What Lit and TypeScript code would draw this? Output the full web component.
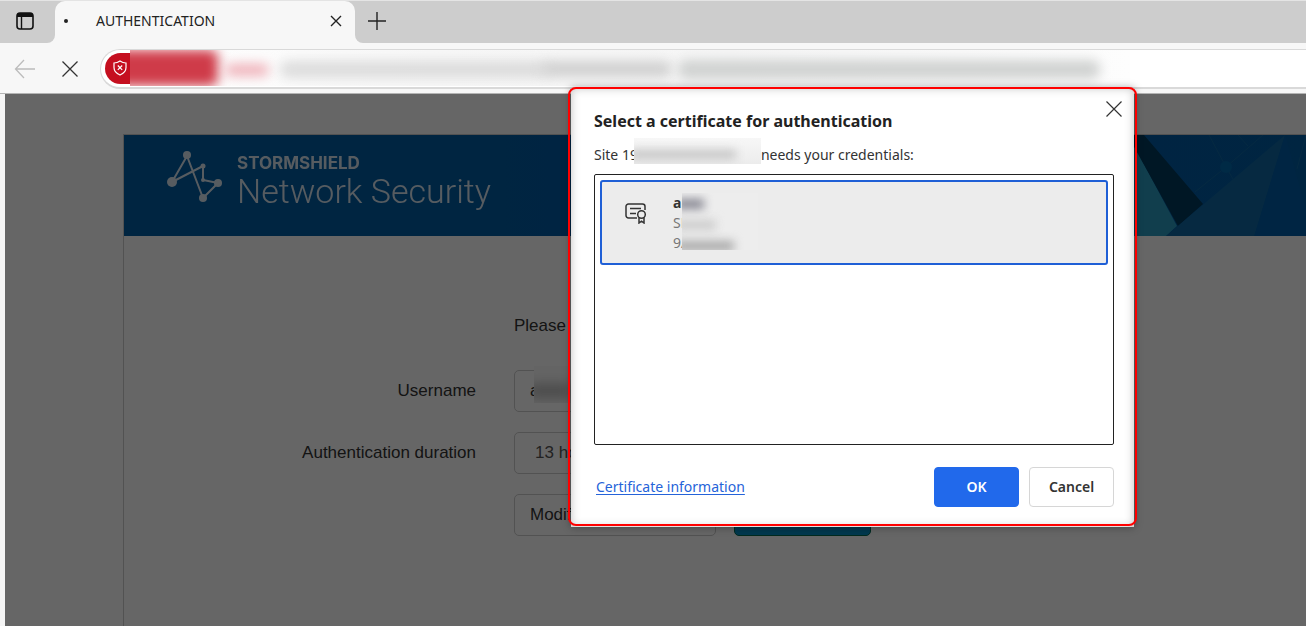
import { LitElement, html, css } from "lit";
import { customElement } from "lit/decorators.js";

const ui = css`
  :host {
    display: block;
    box-sizing: border-box;
    font-family: "Noto Sans", "Open Sans", sans-serif;
    font-size: 14px;
    line-height: 20px;
    color: #222;
  }
  *, *::before, *::after { box-sizing: border-box; }
  button, input, select { font: inherit; color: inherit; margin: 0; }
  svg { display: block; flex: none; }
`;

@customElement("browser-bar")
export class BrowserBar extends LitElement {
  static styles = [ui, css`
    .tabs { display: flex; padding-top: 1px; background: linear-gradient(#e4e4e4 1px, #cdcdcd 1px 30px, #f7f7f7 30px); }
    .lead, .rest { background: #cdcdcd; height: 42px; display: flex; align-items: center; padding-bottom: 2px; }
    .lead { width: 55px; padding-left: 16px; border-radius: 0 0 8px 0; }
    .rest { flex: 1; padding-left: 12px; border-radius: 0 0 0 8px; }
    .tab { width: 300px; height: 43px; background: #f7f7f7; border-radius: 10px 10px 0 0; display: flex; align-items: center; padding: 0 13px 3px 9px; }
    .dot { width: 4px; height: 4px; border-radius: 50%; background: #222; margin-right: 28px; }
    .name { flex: 1; }
    .icon { border: 0; padding: 0; background: none; display: flex; }
    .tools { display: flex; height: 50px; align-items: center; background: #f7f7f7; padding-left: 14px; border-bottom: 1px solid #b4b4b4; }
    .stop { margin: 0 22px 0 26px; }
    .address { flex: 1; min-width: 0; height: 40px; background: #fff; border: 1px solid #d9d9d9; border-width: 1px 0 2px 1px; border-radius: 20px 0 0 20px; display: flex; align-items: center; padding-left: 4px; }
    .warn { height: 31px; width: 25px; background: #c50f1f; border-radius: 16px 0 0 16px; display: flex; align-items: center; padding-left: 7px; }
    .veil { position: relative; width: 1000px; height: 36px; overflow: hidden; background: linear-gradient(90deg, #fff, #f8f8f8 30%, #f6f6f6 60%, #fdfdfd); flex: none; }
    .smear { position: absolute; filter: blur(6px); border-radius: 8px; }
    .s1 { left: -20px; top: 0; width: 108px; height: 36px; background: #cf3b49; }
    .s2 { left: 95px; top: 14px; width: 44px; height: 12px; background: #efb0b8; }
    .s3 { left: 150px; top: 11px; width: 270px; height: 17px; background: #dcdcdc; }
    .s4 { left: 412px; top: 11px; width: 130px; height: 16px; background: #d0d0d0; }
    .s5 { left: 548px; top: 10px; width: 422px; height: 19px; background: #d0d2d1; }
  `];
  render() {
    return html`
      <div class="tabs">
        <div class="lead"><button class="icon" aria-label="Tab actions">
          <svg width="18" height="18" viewBox="0 0 18 18"><rect x="1" y="1" width="16" height="16" rx="3" fill="none" stroke="#111" stroke-width="1.6"/><path d="M1 5V4a3 3 0 0 1 3-3h10a3 3 0 0 1 3 3v1z" fill="#111"/><path d="M5.5 5v12" stroke="#111" stroke-width="1.4"/></svg>
        </button></div>
        <div class="tab"><span class="dot"></span><span class="name">AUTHENTICATION</span>
          <button class="icon" aria-label="Close tab"><svg width="12" height="12" viewBox="0 0 12 12"><path d="M1 1l10 10M11 1L1 11" stroke="#222" stroke-width="1.4"/></svg></button>
        </div>
        <div class="rest"><button class="icon" aria-label="New tab"><svg width="20" height="20" viewBox="0 0 20 20"><path d="M1 10h18M10 1v18" stroke="#222" stroke-width="1.4"/></svg></button></div>
      </div>
      <div class="tools">
        <button class="icon" aria-label="Back"><svg width="22" height="20" viewBox="0 0 22 20"><path d="M21 10H1.5M10 1L1.5 10l8.500 9" fill="none" stroke="#bcbcbc" stroke-width="1.3"/></svg></button>
        <button class="icon stop" aria-label="Stop"><svg width="16" height="16" viewBox="0 0 16 16"><path d="M.5.5l15 15M15.500.5l-15 15" stroke="#333" stroke-width="1.3"/></svg></button>
        <div class="address">
          <span class="warn"><svg width="16" height="16" viewBox="0 0 16 16" fill="none" stroke="#fff" stroke-width="1.2"><path d="M8 1c2 1.400 4 2 6 2v4.500c0 3.500-2.500 6-6 7.500-3.500-1.500-6-4-6-7.500V3c2 0 4-.6 6-2z"/><path d="M5.800 5.500l4.400 4.400M10.200 5.500L5.800 9.900"/></svg></span>
          <span class="veil"><i class="smear s1"></i><i class="smear s2"></i><i class="smear s3"></i><i class="smear s4"></i><i class="smear s5"></i></span>
        </div>
      </div>`;
  }
}

@customElement("portal-page")
export class PortalPage extends LitElement {
  static styles = [ui, css`
    :host { font-family: "Liberation Sans", Arial, sans-serif; font-size: 17px; line-height: 26px; color: #333; background: #fff; padding: 40px 0 0 118px; position: relative; }
    .card { border: 1px solid #ccc; border-right: 0; border-bottom: 0; flex: 1; }
    .banner { height: 101px; background: linear-gradient(90deg, #005ca4 0 380px, #0058a8 560px, #005ca4); display: flex; justify-content: space-between; overflow: hidden; }
    .brand { display: flex; padding: 14px 0 0 42px; gap: 13px; }
    .words { color: #fff; opacity: .85; padding-top: 4px; }
    .maker { font-family: Inter, sans-serif; font-weight: 700; font-size: 17px; line-height: 21px; display: block; }
    .product { font-family: Roboto, sans-serif; font-weight: 300; font-size: 34px; line-height: 34px; display: block; }
    form { display: grid; grid-template-columns: 352px 1fr; column-gap: 38px; row-gap: 20px; padding-top: 77px; }
    .note { grid-column: 2; padding-bottom: 11px; }
    label { text-align: right; line-height: 42px; }
    .box { height: 42px; width: 340px; border: 1px solid #ccc; border-radius: 5px; background: #fff; padding: 0 15px; }
    .field { position: relative; height: 42px; }
    select.box { appearance: none; padding: 0 20px; color: #555; }
    .hide { position: absolute; left: 20px; top: -4px; width: 60px; height: 37px; background: #fafafa; overflow: hidden; }
    .hide i { position: absolute; left: -6px; top: 18px; width: 44px; height: 14px; background: #bbb; filter: blur(6px); }
    .row { grid-column: 2; display: flex; gap: 18px; }
    .row .box { width: 202px; text-align: left; color: #333; }
    .go { width: 137px; height: 42px; border: 1px solid #00694f; border-radius: 5px; background: #008cc4; }
    .scrim { position: absolute; inset: 0; background: rgba(0, 0, 0, .6); }
  `];
  render() {
    return html`
      <div class="card">
        <div class="banner">
          <div class="brand">
            <svg width="58" height="58" viewBox="0 0 58 58" opacity=".85"><path d="M6 33L21 7M6 33L37 17M21 7L37 49M37 17V31L52 34M52 34L37 49" fill="none" stroke="#fff" stroke-width="2"/><g fill="#fff"><circle cx="6" cy="33" r="5"/><circle cx="21" cy="6" r="4"/><circle cx="37" cy="17" r="2.500"/><circle cx="37" cy="31" r="2"/><circle cx="52" cy="34" r="4"/><circle cx="37" cy="49" r="4"/></g></svg>
            <div class="words"><span class="maker">STORMSHIELD</span><span class="product">Network Security</span></div>
          </div>
          <svg width="173" height="102" viewBox="0 0 173 102"><path d="M0 0H6V20L44 91 32 102H0z" fill="#2b9bc0"/><path d="M0 0H11L70 69 45 91 0 10z" fill="#003a5c"/><path d="M32 102L152 0 121 102z" fill="#0f68a4"/><path d="M152 0L121 102H173V75z" fill="#005ea8"/><g fill="none" stroke="#0f68a4"><path d="M62 57L93 32 130 0M93 32L76 0M93 32l7 12M105 0l10 11M173 0l-9 34"/></g><circle cx="93" cy="32" r="6" fill="#0069ac"/></svg>
        </div>
        <form @submit=${(e: Event) => e.preventDefault()}>
          <span class="note">Please</span>
          <label for="user">Username</label>
          <div class="field"><input class="box" id="user" value="a"><span class="hide"><i></i></span></div>
          <label for="time">Authentication duration</label>
          <select class="box" id="time"><option>13 hours</option></select>
          <div class="row"><button class="box" type="button">Modify</button><button class="go" type="button" aria-label="OK"></button></div>
        </form>
      </div>
      <div class="scrim"></div>`;
  }
}

@customElement("certificate-dialog")
export class CertificateDialog extends LitElement {
  static styles = [ui, css`
    :host { width: 563px; background: #fff; padding: 13px 20px 20px 23px; box-shadow: 0 0 8px rgba(0, 0, 0, .4), inset 0 0 10px rgba(0, 0, 0, .25); }
    :host::after { content: ""; position: absolute; inset: -1px -3px 1px; border: 2px solid #f00; border-radius: 8px; pointer-events: none; }
    .top { display: flex; justify-content: space-between; align-items: flex-start; }
    h1 { margin: 8px 0 0; font-size: 16px; line-height: 24px; font-weight: 700; }
    .x { border: 0; background: none; padding: 0; margin-right: -8px; }
    .site { margin: 12px 0 9px; display: flex; white-space: pre; color: #333; }
    .veil { position: relative; overflow: hidden; width: 127px; height: 26px; margin: -7px 0 1px -4px; background: linear-gradient(#f7f7f7, #ececec); }
    .veil i { position: absolute; left: -4px; top: 12px; width: 106px; height: 9px; background: #c4c4c4; filter: blur(5px); }
    .list { height: 271px; border: 1px solid #222; border-radius: 2px; padding: 5px; }
    .cert { display: flex; width: 100%; height: 85px; border: 2px solid #1f5fd6; border-radius: 3px; background: #ececec; padding: 11px 23px; gap: 26px; text-align: left; }
    .cert svg { margin-top: 9px; }
    .lines { position: relative; flex: 1; color: #777; }
    .lines span { display: block; }
    .lines b { color: #333; }
    .lines .mask { position: absolute; left: 9px; top: 0; width: 76px; height: 57px; background: #ededed; overflow: hidden; }
    .mask i { position: absolute; left: -6px; height: 10px; filter: blur(5px); }
    .m1 { top: 6px; width: 28px; background: #858590; }
    .m2 { top: 27px; width: 40px; background: #ccc; }
    .m3 { top: 48px; width: 58px; background: #a8a8a8; }
    .foot { display: flex; align-items: center; gap: 10px; margin-top: 22px; }
    a { color: #2563d9; flex: 1; padding-left: 2px; text-underline-offset: 2px; }
    .btn { width: 85px; height: 40px; border-radius: 4px; border: 1px solid #d6d6d6; background: #fff; font-weight: 600; color: #333; }
    .ok { background: #2169eb; border-color: #2169eb; color: #fff; }
  `];
  render() {
    return html`
      <div class="top"><h1>Select a certificate for authentication</h1>
        <button class="x" aria-label="Close"><svg width="16" height="16" viewBox="0 0 16 16"><path d="M.5.5l15 15M15.500.5l-15 15" stroke="#333" stroke-width="1.200"/></svg></button></div>
      <div class="site">Site 19<span class="veil"><i></i></span>needs your credentials:</div>
      <div class="list"><button class="cert">
        <svg width="22" height="22" viewBox="0 0 22 22" fill="none" stroke="#333" stroke-width="1.500"><path d="M12 16H3.500A2.500 2.500 0 0 1 1 13.500v-9A2.500 2.500 0 0 1 3.500 2h14A2.500 2.500 0 0 1 20 4.500V8M5 6.500h11M5 11.500h6"/><circle cx="16.500" cy="12.500" r="3.800"/><path d="M14 15.500V21l2.500-1.800L19 21v-5.500"/></svg>
        <span class="lines"><b>al</b><span>SN</span><span>9/</span><span class="mask"><i class="m1"></i><i class="m2"></i><i class="m3"></i></span></span>
      </button></div>
      <div class="foot"><a href="#">Certificate information</a><button class="btn ok">OK</button><button class="btn">Cancel</button></div>`;
  }
}

@customElement("app-root")
export class AppRoot extends LitElement {
  static styles = css`
    :host { display: flex; flex-direction: column; min-height: 100vh; background: #f5f5f5; position: relative; overflow: hidden; }
    portal-page { flex: 1; margin-left: 5px; display: flex; flex-direction: column; }
    certificate-dialog { position: absolute; left: 571px; top: 88px; }
  `;
  render() {
    return html`<browser-bar></browser-bar><portal-page></portal-page><certificate-dialog></certificate-dialog>`;
  }
}
